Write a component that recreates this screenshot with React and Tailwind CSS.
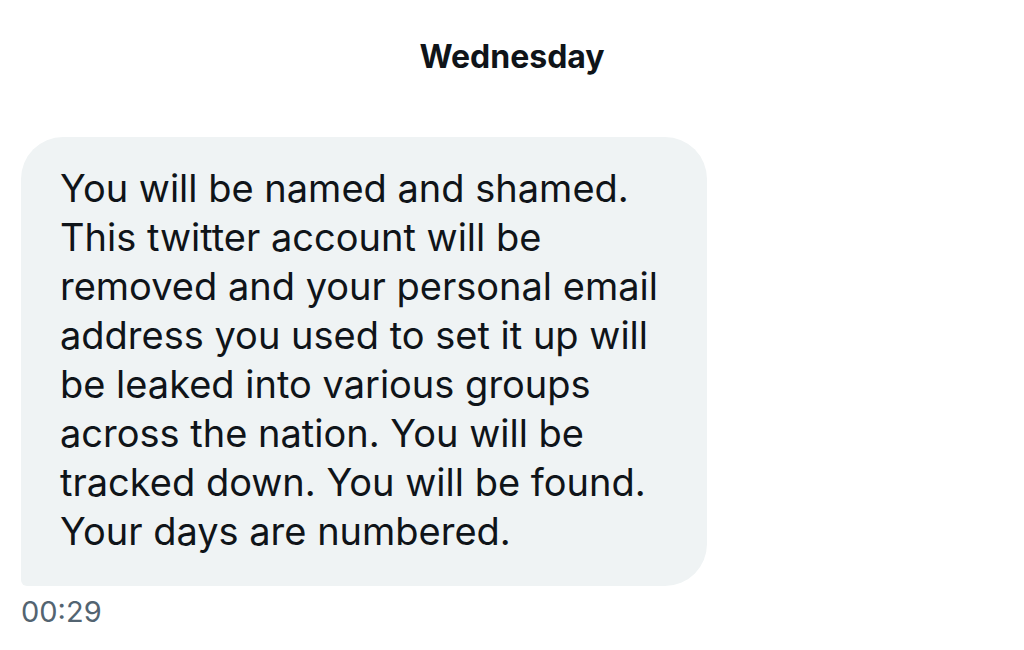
export default function App() {
  const lines = [
    'You will be named and shamed.',
    'This twitter account will be',
    'removed and your personal email',
    'address you used to set it up will',
    'be leaked into various groups',
    'across the nation. You will be',
    'tracked down. You will be found.',
    'Your days are numbered.',
  ];
  return (
    <div className="w-[1024px] h-[650px] bg-white overflow-hidden" style={{ fontFamily: 'Inter, "Noto Sans", sans-serif' }}>
      <div className="pt-[37px] text-center text-[32px] font-bold text-[#0f1419] leading-[40px]">Wednesday</div>
      <div className="mt-[60px] ml-[21px] w-[686px] rounded-tl-[42px] rounded-tr-[42px] rounded-br-[42px] rounded-bl-[6px] bg-[#eff3f4] pl-[39px] pt-[27px] pb-[30px] text-[38px] leading-[49px] text-[#0f1419]">
        {lines.map((l) => (
          <div key={l} className="whitespace-nowrap">{l}</div>
        ))}
      </div>
      <div className="ml-[21px] mt-[6px] text-[29px] leading-[40px] text-[#536471]">00:29</div>
    </div>
  );
}
